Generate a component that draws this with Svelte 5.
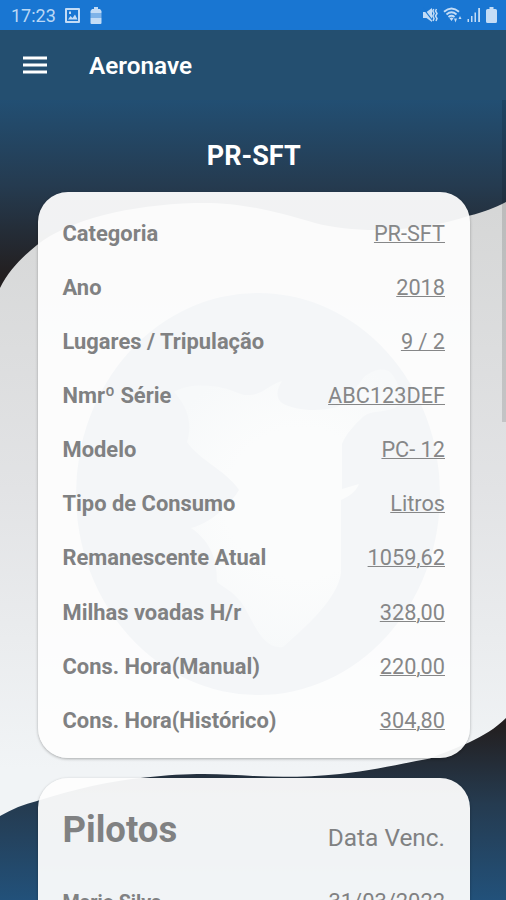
<script>
    const details = [
        {label: "Categoria", value: "PR-SFT"},
        {label: "Ano", value: "2018"},
        {label: "Lugares / Tripulação", value: "9 / 2"},
        {label: "Nmrº Série", value: "ABC123DEF"},
        {label: "Modelo", value: "PC- 12"},
        {label: "Tipo de Consumo", value: "Litros"},
        {label: "Remanescente Atual", value: "1059,62"},
        {label: "Milhas voadas H/r", value: "328,00"},
        {label: "Cons. Hora(Manual)", value: "220,00"},
        {label: "Cons. Hora(Histórico)", value: "304,80"}
    ];

    const pilots = [
        {name: "Mario Silva", expires: "31/03/2022"}
    ];
</script>

<div class="screen">
    <svg class="backdrop" viewBox="0 0 506 900" aria-hidden="true">
        <defs>
            <linearGradient id="sky" x1="0" y1="95" x2="0" y2="275" gradientUnits="userSpaceOnUse">
                <stop offset="0" stop-color="#225075" />
                <stop offset="0.5" stop-color="#253b50" />
                <stop offset="1" stop-color="#231f20" />
            </linearGradient>
            <linearGradient id="ground" x1="0" y1="725" x2="0" y2="900" gradientUnits="userSpaceOnUse">
                <stop offset="0" stop-color="#231f20" />
                <stop offset="0.45" stop-color="#253b50" />
                <stop offset="1" stop-color="#22517a" />
            </linearGradient>
            <linearGradient id="band" x1="0" y1="210" x2="0" y2="770" gradientUnits="userSpaceOnUse">
                <stop offset="0" stop-color="#d6d7d7" />
                <stop offset="0.5" stop-color="#e2e3e5" />
                <stop offset="1" stop-color="#f1f4f6" />
            </linearGradient>
        </defs>
        <rect width="506" height="900" fill="url(#band)" />
        <path fill="url(#sky)" d="M0 0H506V202C494 208 484 212 470 215.500C425 231 360 235 315 223C270 210 240 202 195 203C130 205 70 219 37 245C22 257 9 270 0 288Z" />
        <path fill="url(#ground)" d="M0 900V816C12 809 24 804 37 801C75 789 110 781 145 777.500C190 772 225 774 253 776C280 777.500 310 777 340 774C375 770 405 763 430 758.500C455 748 485 739 506 718V900Z" />
    </svg>

    <div class="status">
        <div class="status-left">
            <span class="clock">17:23</span>
            <svg width="15" height="15" viewBox="0 0 15 15">
                <path fill-rule="evenodd" d="M1 0H14Q15 0 15 1V14Q15 15 14 15H1Q0 15 0 14V1Q0 0 1 0ZM2 2V13H13V2ZM3 11.500L5.500 8L7.500 10L10 6.500L12.500 11.500ZM4 3.500H6V6H4Z" />
            </svg>
            <svg class="pack" width="12" height="17" viewBox="0 0 12 17">
                <path d="M4 0H8V2H10L11.500 4V6H.500V4L2 2H4ZM.500 11H11.500V16Q11.500 17 10.500 17H1.500Q.500 17 .500 16Z" />
                <path opacity=".6" d="M.500 6H11.500V11H.500Z" />
            </svg>
        </div>
        <div class="status-right">
            <svg width="15" height="16" viewBox="0 0 15 16">
                <path d="M0 5H3.500L9 1V15L3.500 11H0Z" />
                <path class="cut" d="M0 1L10 14" />
                <path class="line" d="M10.700 2L9.800 4L11 6.500L9.800 9L11 11.500L10 14M13.500 2L12.500 4L14 6.500L12.500 9L14 11.500L13 14" />
            </svg>
            <svg width="19" height="16" viewBox="0 0 19 16">
                <path class="line bold" d="M1 4.800Q8.500 -1.800 16 4.800M3.500 7.500Q8.500 3.200 13.500 7.500M5.500 10Q8.500 7.700 11.500 10" />
                <path d="M6.500 11.300Q8.500 9.800 10.500 11.300L8.500 14ZM11 11.500H14L12.500 15.500ZM15.500 12L17 9L18.500 12Z" />
            </svg>
            <svg width="14" height="16" viewBox="0 0 14 16">
                <path d="M.500 12H2V15H.500ZM4 9H5.500V15H4ZM7.500 5.500H9V15H7.500ZM11.200 1H13V15H11.200Z" />
            </svg>
            <svg width="11" height="16" viewBox="0 0 11 16">
                <path d="M3.500 0H7.500V2H9.500Q11 2 11 3.500V14.500Q11 16 9.500 16H1.500Q0 16 0 14.500V3.500Q0 2 1.500 2H3.500Z" />
            </svg>
        </div>
    </div>

    <header class="appbar">
        <button class="menu" aria-label="Menu">
            <svg width="24" height="18" viewBox="0 0 24 18">
                <path d="M0 .500H24V3.500H0ZM0 7.500H24V10.500H0ZM0 14.500H24V17.500H0Z" />
            </svg>
        </button>
        <h1>Aeronave</h1>
    </header>

    <main>
        <h2 class="title">PR-SFT</h2>

        <section class="card details">
            <svg class="watermark" viewBox="0 0 366 402" aria-hidden="true">
                <defs>
                    <radialGradient id="plane" cx="225" cy="210" r="150" gradientUnits="userSpaceOnUse">
                        <stop offset="0.5" stop-color="#fbfcfc" />
                        <stop offset="1" stop-color="#f7f9fa" />
                    </radialGradient>
                </defs>
                <ellipse cx="182" cy="201" rx="182" ry="201" fill="#f4f6f8" />
                <path fill="url(#plane)" d="M98 99C112 90 135 92 147 95C158 97 164 103 174 102C188 101 194 91 206 88C201 96 199 104 206 110C219 118 244 119 261 114C273 108 280 94 288 84C298 76 309 74 315 80C326 94 328 109 319 115C306 120 296 117 288 123C278 132 270 141 266 151V196L283 191C280 199 272 204 265 207V280C262 305 230 334 207 354C185 357 177 326 165 309C154 296 148 295 141 289C141 270 137 250 115 235C135 230 154 212 163 197C151 178 124 168 111 149C117 130 111 113 98 99Z" />
            </svg>
            {#each details as item}
                <div class="row">
                    <span class="label">{item.label}</span>
                    <span class="value">{item.value}</span>
                </div>
            {/each}
        </section>

        <section class="card pilots">
            <div class="pilots-head">
                <h3>Pilotos</h3>
                <span>Data Venc.</span>
            </div>
            {#each pilots as pilot}
                <div class="row pilot">
                    <span class="name">{pilot.name}</span>
                    <span>{pilot.expires}</span>
                </div>
            {/each}
        </section>
    </main>

    <div class="scrollbar"></div>
</div>

<style>
    :global(body) {
        margin: 0;
    }

    .screen {
        position: relative;
        height: 900px;
        overflow: hidden;
        display: flex;
        flex-direction: column;
        font-family: Roboto, "Liberation Sans", sans-serif;
        color: #808182;
    }

    .backdrop {
        position: absolute;
        inset: 0;
        width: 100%;
        height: 100%;
    }

    .status, .appbar, main {
        position: relative;
    }

    .status {
        height: 30px;
        flex-shrink: 0;
        display: flex;
        align-items: center;
        justify-content: space-between;
        box-sizing: border-box;
        padding: 0 9px 0 11px;
        background: #1976d2;
        color: #b9d8f6;
    }

    .status svg {
        fill: #c3dcf6;
    }

    .status-left, .status-right {
        display: flex;
        align-items: center;
    }

    .status-right {
        gap: 5px;
    }

    .status .line {
        fill: none;
        stroke: #c3dcf6;
        stroke-width: 1.5;
    }

    .status .bold {
        stroke-width: 1.9;
    }

    .status .cut {
        stroke: #1976d2;
        stroke-width: 1.2;
    }

    .clock {
        font-size: 18px;
        line-height: 30px;
        margin-right: 9px;
        padding-top: 1px;
    }

    .pack {
        margin-left: 10px;
    }

    .appbar {
        height: 70px;
        flex-shrink: 0;
        display: flex;
        align-items: center;
        padding-left: 23px;
        background: #244f70;
    }

    .menu {
        display: flex;
        padding: 0;
        border: none;
        background: none;
        cursor: pointer;
    }

    .menu svg {
        fill: #fff;
    }

    h1 {
        margin: 1px 0 0 42px;
        color: #fff;
        font-size: 24.3px;
        font-weight: 600;
    }

    main {
        display: flex;
        flex-direction: column;
        padding: 0 36px 0 37.5px;
    }

    .title {
        margin: 39px 0 18px;
        height: 35px;
        line-height: 35px;
        text-align: center;
        color: #fff;
        font-size: 27px;
        font-weight: 700;
    }

    .card {
        position: relative;
        box-sizing: border-box;
        padding: 0 25px;
        border-radius: 30px;
        background: rgba(253, 253, 253, 0.95);
        box-shadow: 0 1px 3px rgba(0, 0, 0, 0.3);
    }

    .details {
        height: 566px;
        padding-top: 14px;
    }

    .watermark {
        position: absolute;
        left: 38px;
        top: 101px;
        width: 366px;
        height: 402px;
    }

    .row {
        position: relative;
        height: 54.15px;
        display: flex;
        align-items: center;
        justify-content: space-between;
        font-size: 21.9px;
    }

    .label {
        font-weight: 700;
    }

    .value {
        font-size: 21.7px;
        color: #868788;
        text-decoration: underline;
        text-decoration-thickness: 1px;
    }

    .pilots {
        height: 300px;
        margin-top: 20px;
        padding-top: 23px;
    }

    .pilots-head {
        display: flex;
        justify-content: space-between;
        height: 74px;
        font-size: 24.4px;
        line-height: 73px;
    }

    h3 {
        margin: 0;
        line-height: 58px;
        font-size: 36.5px;
        font-weight: 700;
    }

    .pilot {
        align-items: baseline;
        line-height: 54px;
    }

    .name {
        font-size: 19.7px;
        font-weight: 700;
    }

    .scrollbar {
        position: absolute;
        right: 0;
        top: 100px;
        width: 4px;
        height: 322px;
        background: rgba(0, 0, 0, 0.12);
    }
</style>
